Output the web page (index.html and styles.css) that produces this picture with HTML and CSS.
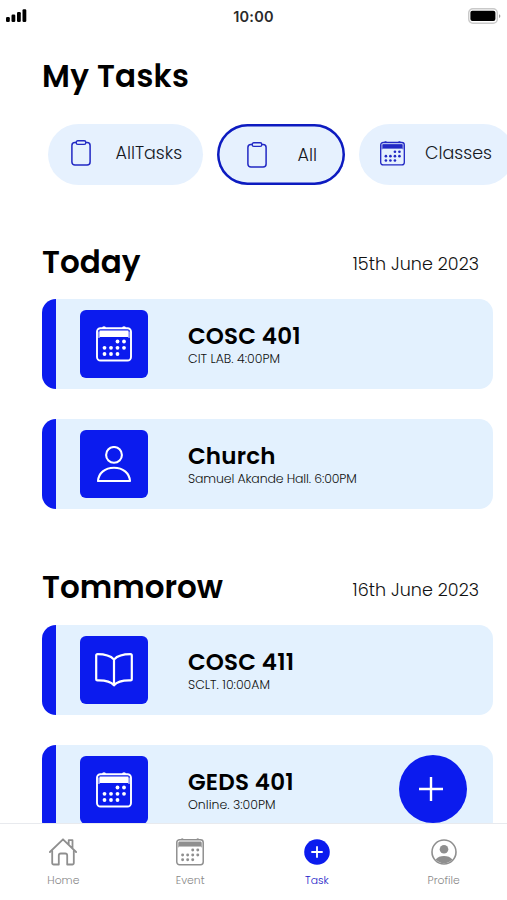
FILE: index.html
```html
<!DOCTYPE html>
<html lang="en">
  <head>
    <meta charset="UTF-8" />
    <meta name="viewport" content="width=device-width, initial-scale=1.0" />
    <title>My Tasks</title>
    <link rel="stylesheet" href="styles.css">
  </head>
  <body>
    <!-- shared icons -->
    <svg class="sprite" width="0" height="0" aria-hidden="true">
      <symbol id="clipboard" viewBox="0 0 20 26">
        <rect x="0.9" y="2.4" width="18.2" height="22.6" rx="3" fill="none" stroke="currentColor" stroke-width="1.5" />
        <rect x="5.2" y="0.8" width="9.6" height="3.6" rx="1.6" fill="#e6f1fe" stroke="currentColor" stroke-width="1.4" />
      </symbol>
      <symbol id="calendar" viewBox="0 0 36 36">
        <path d="M6 2.2a2 2 0 0 1 4 0zM26 2.2a2 2 0 0 1 4 0z" fill="currentColor" />
        <rect x="1" y="2.2" width="34" height="32.3" rx="3.5" fill="none" stroke="currentColor" stroke-width="1.9" />
        <path d="M3.6 4.5h28.8v6.5H3.6z" fill="currentColor" />
        <path d="M3 5.5v6.5M33 5.5v6.5" stroke="currentColor" stroke-width="1" />
        <g fill="currentColor">
          <circle cx="21.5" cy="15.5" r="1.9" /><circle cx="28" cy="15.5" r="1.9" />
          <circle cx="8.5" cy="21.8" r="1.9" /><circle cx="15" cy="21.8" r="1.9" /><circle cx="21.5" cy="21.8" r="1.9" /><circle cx="28" cy="21.8" r="1.9" />
          <circle cx="8.5" cy="28" r="1.9" /><circle cx="15" cy="28" r="1.9" /><circle cx="21.5" cy="28" r="1.9" />
        </g>
      </symbol>
    </svg>

    <div class="app">
      <header class="status">
        <svg class="signal" viewBox="0 0 21 14">
          <rect x="0" y="8" width="3.8" height="5" rx="1.2" />
          <rect x="5.5" y="5.5" width="3.8" height="7.5" rx="1.2" />
          <rect x="11" y="3" width="3.8" height="10" rx="1.2" />
          <rect x="16.5" y="0.3" width="3.8" height="12.7" rx="1.2" />
        </svg>
        <span class="clock">10:00</span>
        <svg class="battery" viewBox="0 0 33 16">
          <rect x="0.7" y="0.7" width="28.6" height="14.6" rx="4.2" fill="#fff" stroke="#c9c9c9" stroke-width="1.4" />
          <rect x="2.4" y="2.8" width="25" height="10.2" rx="2" />
          <path d="M31 6.2a2 2 0 0 1 0 3.8z" fill="#999" />
        </svg>
      </header>

      <main class="content">
        <h1>My Tasks</h1>

        <div class="chips">
          <div class="chip chip-tasks">
            <svg class="clip"><use href="#clipboard" /></svg>
            <span>AllTasks</span>
          </div>
          <div class="chip chip-all active">
            <svg class="clip"><use href="#clipboard" /></svg>
            <span>All</span>
          </div>
          <div class="chip chip-classes">
            <svg class="cal"><use href="#calendar" /></svg>
            <span>Classes</span>
          </div>
        </div>

        <section>
          <div class="day">
            <h2>Today</h2>
            <span class="date">15th June 2023</span>
          </div>
          <div class="cards">
            <article class="card">
              <div class="tile"><svg class="icon"><use href="#calendar" /></svg></div>
              <div class="info">
                <h3>COSC 401</h3>
                <p>CIT LAB. 4:00PM</p>
              </div>
            </article>
            <article class="card">
              <div class="tile">
                <svg class="icon" viewBox="0 0 36 36" fill="none" stroke="#fff" stroke-width="2.1" stroke-linejoin="round">
                  <circle cx="18" cy="8.9" r="7.9" />
                  <path d="M2 35C2.6 27 9 21.7 18 21.7S33.4 27 34 35Z" />
                </svg>
              </div>
              <div class="info">
                <h3>Church</h3>
                <p class="long">Samuel Akande Hall. 6:00PM</p>
              </div>
            </article>
          </div>
        </section>

        <section>
          <div class="day">
            <h2>Tommorow</h2>
            <span class="date">16th June 2023</span>
          </div>
          <div class="cards">
            <article class="card">
              <div class="tile">
                <svg class="book" viewBox="0 0 38 34" fill="none" stroke="#fff" stroke-width="2.2" stroke-linejoin="round">
                  <path d="M19 6.4C15.5 2.8 9.5 1.2 2.5 1.2Q1.2 1.2 1.2 2.5V26Q1.2 27.4 2.6 27.4C10 27.2 15.5 28.2 19 32.3 22.5 28.2 28 27.2 35.4 27.4Q36.8 27.4 36.8 26V2.5Q36.8 1.2 35.5 1.2C28.5 1.2 22.5 2.8 19 6.4zM19 6.4v25.6" />
                </svg>
              </div>
              <div class="info">
                <h3>COSC 411</h3>
                <p>SCLT. 10:00AM</p>
              </div>
            </article>
            <article class="card">
              <div class="tile"><svg class="icon"><use href="#calendar" /></svg></div>
              <div class="info">
                <h3>GEDS 401</h3>
                <p>Online. 3:00PM</p>
              </div>
            </article>
          </div>
        </section>

        <button class="fab" aria-label="Add task">
          <svg viewBox="0 0 24 24" fill="none" stroke="#fff" stroke-width="2.4"><path d="M12 0v24M0 12h24" /></svg>
        </button>
      </main>

      <nav class="tabs">
        <a class="tab">
          <svg class="home" viewBox="0 0 28 28" fill="none" stroke="currentColor" stroke-width="1.8" stroke-linejoin="round" stroke-linecap="round">
            <path d="M3.2 12.8V25a1.5 1.5 0 0 0 1.5 1.5H9.8V17.5a2 2 0 0 1 2-2h4.4a2 2 0 0 1 2 2v9h5.1a1.5 1.5 0 0 0 1.5-1.5V12.8" />
            <path d="M.9 14 14 1.3 27.1 14M19.7 6.5V2.2h3.8v8" />
          </svg>
          <span>Home</span>
        </a>
        <a class="tab">
          <svg class="event"><use href="#calendar" /></svg>
          <span>Event</span>
        </a>
        <a class="tab selected">
          <svg class="round" viewBox="0 0 26 26">
            <circle cx="13" cy="13" r="12.8" fill="currentColor" />
            <path d="M13 7.3v11.4M7.3 13h11.4" stroke="#fff" stroke-width="1.8" />
          </svg>
          <span>Task</span>
        </a>
        <a class="tab">
          <svg class="round" viewBox="0 0 26 26">
            <circle cx="13" cy="13" r="12" fill="none" stroke="currentColor" stroke-width="1.6" />
            <circle cx="13" cy="10.2" r="4.3" fill="currentColor" />
            <path d="M4.6 20.5C6.5 18 9.5 17 13 17s6.5 1 8.4 3.5A11.5 11.5 0 0 1 4.6 20.5z" fill="currentColor" />
          </svg>
          <span>Profile</span>
        </a>
      </nav>
    </div>
  </body>
</html>
```
FILE: styles.css
```css
* {
  box-sizing: border-box;
}

body {
  margin: 0;
  background-color: #fff;
  color: #000;
  font-family: "Poppins", "Inter", sans-serif;
}

h1,
h2,
h3,
p {
  margin: 0;
}

svg {
  display: block;
  flex: none;
}

.sprite {
  position: absolute;
}

.app {
  display: flex;
  flex-direction: column;
  width: 507px;
  height: 900px;
  overflow: hidden;
}

/* status bar */
.status {
  display: grid;
  grid-template-columns: 1fr auto 1fr;
  align-items: center;
  height: 32px;
  padding: 0 6px;
}

.signal {
  width: 21px;
  height: 14px;
}

.clock {
  font-family: "Inter", sans-serif;
  font-size: 14.5px;
  font-weight: 600;
  letter-spacing: 0.2px;
  color: #2a2a2a;
}

.battery {
  width: 33px;
  height: 16px;
  justify-self: end;
}

.content {
  position: relative;
  flex: 1;
  min-height: 0;
  overflow: hidden;
  padding: 24px 14px 0 42px;
}

h1 {
  height: 40px;
  line-height: 40px;
  font-size: 31px;
  font-weight: 600;
  letter-spacing: 0.3px;
}

/* filter chips */
.chips {
  display: flex;
  gap: 14px;
  margin: 28px -14px 55px 6px;
  overflow: hidden;
}

.chip {
  display: flex;
  align-items: center;
  flex: none;
  width: 155px;
  height: 61px;
  border-radius: 31px;
  background-color: #e6f1fe;
  font-size: 17.5px;
  font-weight: 300;
  color: #15181e;
}

.chip svg {
  color: #2229c4;
}

.chip-tasks {
  padding: 0 0 3px 23px;
  gap: 24.5px;
}

.chip-all {
  width: 128px;
  padding-left: 30px;
  gap: 30.5px;
}

.chip-classes {
  padding: 0 0 3px 21px;
  gap: 20px;
}

.active {
  box-shadow: inset 0 0 0 2.5px #0d1bc0;
}

.clip {
  width: 20px;
  height: 26px;
}

.cal {
  width: 25px;
  height: 25px;
}

/* day sections */
section + section {
  margin-top: 56.6px;
}

.day {
  display: flex;
  justify-content: space-between;
  align-items: center;
  height: 44px;
  padding-right: 14px;
  margin-bottom: 15.4px;
}

h2 {
  font-size: 31px;
  font-weight: 600;
}

.date {
  font-size: 17.5px;
  font-weight: 300;
  letter-spacing: 0.05px;
  color: #111;
  margin-top: 4px;
}

.cards {
  display: flex;
  flex-direction: column;
  gap: 29.6px;
}

.card {
  display: flex;
  height: 90px;
  padding: 11px 0 0 24px;
  border-left: 14px solid #0b1bee;
  border-radius: 14px;
  background-color: #e3f1fe;
}

.tile {
  display: flex;
  align-items: center;
  justify-content: center;
  width: 68px;
  height: 68px;
  padding-right: 1px;
  border-radius: 6px;
  background-color: #0b1bee;
  color: #fff;
}

.icon {
  width: 36px;
  height: 36px;
}

.book {
  width: 38px;
  height: 34px;
}

.info {
  padding: 11px 0 0 40px;
}

h3 {
  font-size: 23px;
  line-height: 30px;
  font-weight: 600;
  letter-spacing: 0.2px;
}

.info p {
  font-size: 12.5px;
  line-height: 16px;
  font-weight: 300;
  color: #111;
}

.info .long {
  letter-spacing: -0.13px;
}

.fab {
  position: absolute;
  right: 40px;
  bottom: 0;
  display: flex;
  align-items: center;
  justify-content: center;
  width: 68px;
  height: 68px;
  padding: 0 4px 0 0;
  border: 0;
  border-radius: 50%;
  background-color: #0b1bee;
}

.fab svg {
  width: 24px;
  height: 24px;
}

/* bottom tabs */
.tabs {
  display: grid;
  grid-template-columns: repeat(4, 1fr);
  height: 77px;
  border-top: 1px solid #e8eaee;
}

.tab {
  display: flex;
  flex-direction: column;
  align-items: center;
  padding-top: 14px;
  gap: 8px;
  font-size: 10.8px;
  font-weight: 300;
  line-height: 14px;
  color: #888;
}

.tab svg {
  width: 28px;
  height: 28px;
  color: #8f8f8f;
}

.tab .round {
  width: 26px;
  height: 26px;
  margin: 1px 0;
}

.tab.selected {
  color: #1a20c8;
}

.tab.selected svg {
  color: #0b1bee;
}
```
